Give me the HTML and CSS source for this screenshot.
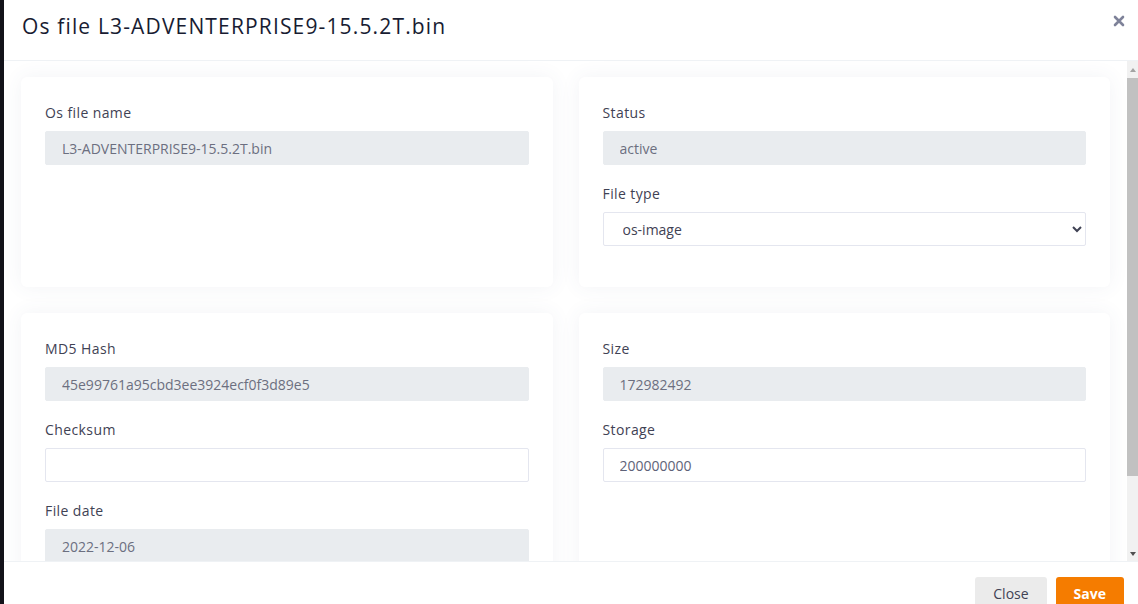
FILE: index.html
```html
<!DOCTYPE html>
<html lang="en">
<head>
  <meta charset="UTF-8">
  <title>Os file</title>
  <link rel="stylesheet" href="styles.css">
</head>
<body>
  <div class="modal">
    <div class="modal-header">
      <h2 class="modal-title">Os file L3-ADVENTERPRISE9-15.5.2T.bin</h2>
      <button class="btn-close" aria-label="Close">
        <svg width="12" height="12" viewBox="0 0 12 12">
          <path d="M2 2L10 10M10 2L2 10" stroke="#7e8299" stroke-width="2.6" stroke-linecap="round"/>
        </svg>
      </button>
    </div>

    <div class="modal-body">
      <div class="scroll-area">
        <div class="card-grid">
          <!-- Name -->
          <div class="card">
            <div class="form-group">
              <label>Os file name</label>
              <input class="form-control" type="text" value="L3-ADVENTERPRISE9-15.5.2T.bin" disabled>
            </div>
          </div>

          <!-- Status / type -->
          <div class="card">
            <div class="form-group">
              <label>Status</label>
              <input class="form-control" type="text" value="active" disabled>
            </div>
            <div class="form-group">
              <label>File type</label>
              <select class="form-control">
                <option selected>os-image</option>
                <option>config</option>
                <option>license</option>
              </select>
            </div>
          </div>

          <!-- Hashes -->
          <div class="card">
            <div class="form-group">
              <label>MD5 Hash</label>
              <input class="form-control" type="text" value="45e99761a95cbd3ee3924ecf0f3d89e5" disabled>
            </div>
            <div class="form-group">
              <label>Checksum</label>
              <input class="form-control" type="text" value="">
            </div>
            <div class="form-group">
              <label>File date</label>
              <input class="form-control" type="text" value="2022-12-06" disabled>
            </div>
          </div>

          <!-- Size -->
          <div class="card">
            <div class="form-group">
              <label>Size</label>
              <input class="form-control" type="text" value="172982492" disabled>
            </div>
            <div class="form-group">
              <label>Storage</label>
              <input class="form-control" type="text" value="200000000">
            </div>
          </div>
        </div>
      </div>

      <!-- classic scrollbar -->
      <div class="scrollbar">
        <span class="sb-btn sb-up"></span>
        <div class="sb-track"><div class="sb-thumb"></div></div>
        <span class="sb-btn sb-down"></span>
      </div>
    </div>

    <div class="modal-footer">
      <button class="btn btn-light">Close</button>
      <button class="btn btn-primary">Save</button>
    </div>
  </div>
</body>
</html>
```

FILE: styles.css
```css
/* Reset */
* {
  box-sizing: border-box;
  margin: 0;
  padding: 0;
}
html, body {
  height: 100%;
}
body {
  font-family: 'Open Sans', 'Noto Sans', sans-serif;
  font-size: 14px;
  background: #121219;
  padding-left: 4px;
  overflow: hidden;
}
/* Modal */
.modal {
  height: 100%;
  background: #fff;
  display: flex;
  flex-direction: column;
}
.modal-header {
  height: 61px;
  flex-shrink: 0;
  display: flex;
  align-items: flex-start;
  justify-content: space-between;
  padding: 11px 13px 0 18px;
  border-bottom: 1px solid #eff2f5;
}
.modal-title {
  font-size: 21px;
  font-weight: 400;
  letter-spacing: 1.15px;
  color: #181c32;
  line-height: 30px;
}
.btn-close {
  background: none;
  border: none;
  margin-top: 4px;
  cursor: pointer;
}
.modal-body {
  flex: 1;
  min-height: 0;
  display: flex;
}
.scroll-area {
  flex: 1;
  overflow: hidden;
  padding: 16px 17px 40px;
}
/* Scrollbar */
.scrollbar {
  width: 11px;
  flex-shrink: 0;
  background: #f1f1f1;
  display: flex;
  flex-direction: column;
}
.sb-btn {
  height: 16px;
  display: flex;
  align-items: center;
  justify-content: center;
}
.sb-up::before {
  content: '';
  border-left: 3.5px solid transparent;
  border-right: 3.5px solid transparent;
  border-bottom: 4px solid #a3a3a3;
  margin-top: 2px;
}
.sb-down::before {
  content: '';
  border-left: 3.5px solid transparent;
  border-right: 3.5px solid transparent;
  border-top: 4px solid #505050;
  margin-top: 2px;
}
.sb-track {
  flex: 1;
  padding-top: 1px;
}
.sb-thumb {
  height: 398px;
  background: #c1c1c1;
}
/* Cards */
.card-grid {
  display: grid;
  grid-template-columns: 1fr 1fr;
  gap: 26px;
}
.card {
  background: #fff;
  border-radius: 6px;
  padding: 25px 24px 23px;
  box-shadow: 0 0 20px rgba(76, 87, 125, 0.07);
}
.form-group {
  margin-bottom: 18px;
}
.form-group label {
  display: block;
  color: #3f4254;
  line-height: 21px;
  letter-spacing: 0.4px;
  margin-bottom: 8px;
}
.form-control {
  display: block;
  width: 100%;
  height: 34px;
  padding: 0 16px;
  font-family: inherit;
  font-size: 14px;
  color: #5e6278;
  background-color: #fff;
  border: 1px solid #e4e6ef;
  border-radius: 2px;
  outline: none;
}
.form-control:disabled {
  background-color: #e9ecef;
  border-color: #e9ecef;
  color: #6c6f80;
}
select.form-control {
  color: #3f4254;
  padding-left: 15px;
}
/* Footer */
.modal-footer {
  flex-shrink: 0;
  height: 43px;
  border-top: 1px solid #eff2f5;
  display: flex;
  justify-content: flex-end;
  align-items: flex-start;
  gap: 9px;
  padding: 15px 14px 0 0;
}
.btn {
  font-family: inherit;
  font-size: 14px;
  line-height: 21px;
  padding: 6px 18px;
  border: none;
  border-radius: 3px;
  cursor: pointer;
}
.btn-light {
  background: #ebebeb;
  color: #3f4254;
}
.btn-primary {
  background: #f57c00;
  color: #fff;
  font-weight: 700;
}
```
